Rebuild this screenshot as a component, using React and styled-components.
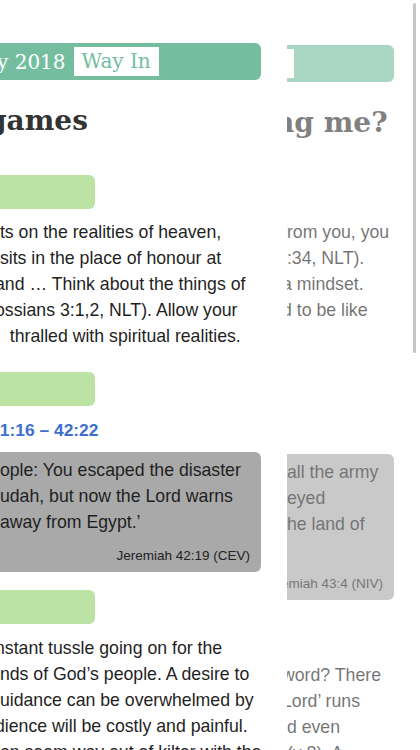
import React from 'react'
import styled, { createGlobalStyle } from 'styled-components'

const GlobalStyle = createGlobalStyle`
  html, body {
    margin: 0;
    padding: 0;
    background: #fff;
    overflow: hidden;
  }
  body {
    font-family: "Liberation Sans", Arial, sans-serif;
  }
`

const leftPage = {
  top: 43,
  date: 'y 2018',
  labelShift: 0,
  title: 'games',
  blocks: [
    { type: 'bar', width: 95, mt: 37 },
    {
      type: 'text',
      mt: 10,
      lines: [
        ' ts on the realities of heaven,',
        ' sits in the place of honour at',
        'and … Think about the things of',
        'ossians 3:1,2, NLT). Allow your',
        '   thralled with spiritual realities.',
      ],
    },
    { type: 'bar', width: 95, mt: 23 },
    { type: 'passage', text: ' 1:16 – 42:22', mt: 11 },
    {
      type: 'quote',
      mt: 9,
      lines: [
        ' ople: You escaped the disaster',
        ' udah, but now the Lord warns',
        ' away from Egypt.’',
      ],
      source: 'Jeremiah 42:19 (CEV)',
    },
    { type: 'bar', width: 95, mt: 18 },
    {
      type: 'text',
      mt: 11,
      lines: [
        'nstant tussle going on for the',
        ' nds of God’s people. A desire to',
        ' uidance can be overwhelmed by',
        'dience will be costly and painful.',
        ' an seem way out of kilter with the',
      ],
    },
  ],
}

const rightPage = {
  top: 45,
  date: '',
  labelShift: -78,
  title: 'ng me?',
  faded: true,
  blocks: [
    { type: 'bar', width: 0, mt: 37 },
    {
      type: 'text',
      mt: 8,
      lines: ['from you, you', ' :34, NLT).', 'a mindset.', 'd to be like', ''],
    },
    { type: 'bar', width: 0, mt: 23 },
    { type: 'passage', text: '', mt: 11 },
    {
      type: 'quote',
      mt: 11,
      lines: [' all the army', ' eyed', 'the land of', ''],
      source: 'Jeremiah 43:4 (NIV)',
    },
    {
      type: 'text',
      mt: 62,
      lines: ['word? There', 'Lord’ runs', ' d even', ' (v 8). A'],
    },
  ],
}

const Block = ({ block }) => {
  if (block.type === 'bar') return <GreenBar $width={block.width} $mt={block.mt} />
  if (block.type === 'passage') return <Passage $mt={block.mt}>{block.text || ' '}</Passage>
  if (block.type === 'quote') {
    return (
      <Quote $mt={block.mt}>
        <Lines>
          {block.lines.map((line, i) => (
            <Line key={i}>{line || ' '}</Line>
          ))}
        </Lines>
        <Source>
          <span>{block.source}</span>
        </Source>
      </Quote>
    )
  }
  return (
    <Lines $mt={block.mt}>
      {block.lines.map((line, i) => (
        <Line key={i}>{line || ' '}</Line>
      ))}
    </Lines>
  )
}

const Page = ({ page, width }) => (
  <Window $width={width} $top={page.top} $faded={page.faded}>
    <Header>
      {page.date && <DateText>{page.date}</DateText>}
      <Label $shift={page.labelShift}>Way In</Label>
    </Header>
    <Title>{page.title}</Title>
    {page.blocks.map((block, i) => (
      <Block key={i} block={block} />
    ))}
  </Window>
)

const App = () => (
  <>
    <GlobalStyle />
    <Screen>
      <Carousel>
        <Page page={leftPage} width={261} />
        <Page page={rightPage} width={107} />
      </Carousel>
      <ScrollThumb />
    </Screen>
  </>
)

export default App

const Screen = styled.div`
  width: 420px;
  height: 750px;
  overflow: hidden;
  position: relative;
  background: #fff;
`

const Carousel = styled.div`
  display: flex;
  gap: 26px;
  align-items: flex-start;
`

const Window = styled.div`
  width: ${(p) => p.$width}px;
  flex-shrink: 0;
  overflow: hidden;
  padding-top: ${(p) => p.$top}px;
  opacity: ${(p) => (p.$faded ? 0.62 : 1)};
`

const Header = styled.div`
  height: 37px;
  background: #74bd9f;
  border-radius: 0 6px 6px 0;
  display: flex;
  align-items: center;
  gap: 8px;
  font-family: "DejaVu Serif", "Liberation Serif", serif;
  font-size: 20px;
  color: #fff;
  white-space: nowrap;
`

const DateText = styled.span`
  margin-left: -3px;
`

const Label = styled.span`
  flex-shrink: 0;
  height: 29px;
  line-height: 29px;
  padding: 0 8px;
  margin-left: ${(p) => p.$shift}px;
  background: #fff;
  color: #74bd9f;
`

const Title = styled.h1`
  margin: 23px 0 0 -13px;
  font-family: "DejaVu Serif", "Liberation Serif", serif;
  font-weight: bold;
  font-size: 28px;
  line-height: 35px;
  color: #333;
  white-space: nowrap;
`

const GreenBar = styled.div`
  width: ${(p) => p.$width}px;
  height: 34px;
  margin-top: ${(p) => p.$mt}px;
  background: #bce3a4;
  border-radius: 0 6px 6px 0;
`

const Lines = styled.div`
  margin-top: ${(p) => p.$mt || 0}px;
  margin-left: -5px;
  font-size: 17.7px;
  line-height: 26px;
  color: #1f1f1f;
`

const Line = styled.div`
  white-space: pre;
`

const Passage = styled.div`
  margin: ${(p) => p.$mt}px 0 0 -5px;
  font-size: 17.4px;
  line-height: 26px;
  font-weight: bold;
  color: #3d6fcf;
  white-space: pre;
`

const Quote = styled.div`
  margin-top: ${(p) => p.$mt}px;
  padding: 5px 0 6px;
  background: #a9a9a9;
  border-radius: 0 6px 6px 0;
`

const Source = styled.div`
  display: flex;
  justify-content: flex-end;
  margin-top: 11px;
  padding-right: 11px;
  font-size: 13.5px;
  line-height: 20px;
  color: #222;
  white-space: nowrap;

  span {
    flex-shrink: 0;
  }
`

const ScrollThumb = styled.div`
  position: absolute;
  top: 3px;
  right: 4px;
  width: 3px;
  height: 350px;
  border-radius: 2px;
  background: #c6c6c6;
`
